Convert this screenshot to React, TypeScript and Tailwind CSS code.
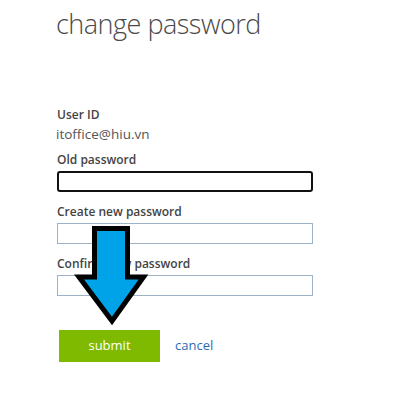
import React from "react";

const font = { fontFamily: '"Open Sans", "Segoe UI", sans-serif' };

function Field({ label, active, first }: { label: string; active?: boolean; first?: boolean }) {
  return (
    <div className={first ? "" : "mt-[10px]"}>
      <div className="text-[12px] leading-[20px] font-semibold text-[#444]">{label}</div>
      <input
        type="password"
        className={
          active
            ? "mt-px block w-[256px] h-[21px] border-2 border-[#111] rounded-[3px] bg-white outline-none"
            : "mt-px block w-[256px] h-[21px] border border-[#9db2c7] bg-white outline-none"
        }
      />
    </div>
  );
}

export default function App() {
  return (
    <div className="relative w-[402px] h-[401px] bg-white pl-[57px] overflow-hidden" style={font}>
      <h1 className="mt-[5px] text-[27px] leading-[37px] font-light tracking-[-0.5px] text-[#4a4a4a] -ml-px">
        change password
      </h1>

      <div className="mt-[63px]">
        <div className="text-[12px] leading-[20px] font-semibold text-[#444]">User ID</div>
        <div className="text-[13.5px] leading-[19px] text-[#555] -ml-px">itoffice@hiu.vn</div>
        <div className="mt-[6px]">
          <Field label="Old password" active first />
        </div>
        <Field label="Create new password" />
        <Field label="Confirm new password" />
      </div>

      <div className="mt-[34px] flex items-center">
        <button className="w-[101px] h-[32px] bg-[#7fba00] text-white text-[13px] ml-[2px]">submit</button>
        <a className="ml-[15px] text-[13px] text-[#2d6cb5]">cancel</a>
      </div>

      {/* annotation arrow */}
      <svg className="absolute left-0 top-0 pointer-events-none" width="402" height="401">
        <polygon
          points="94.5,228.5 127.5,228.5 127.5,277 143.5,277 112,321 79,277 94.5,277"
          fill="#00a2e8"
          stroke="#000"
          strokeWidth="5"
          strokeLinejoin="miter"
        />
      </svg>
    </div>
  );
}
